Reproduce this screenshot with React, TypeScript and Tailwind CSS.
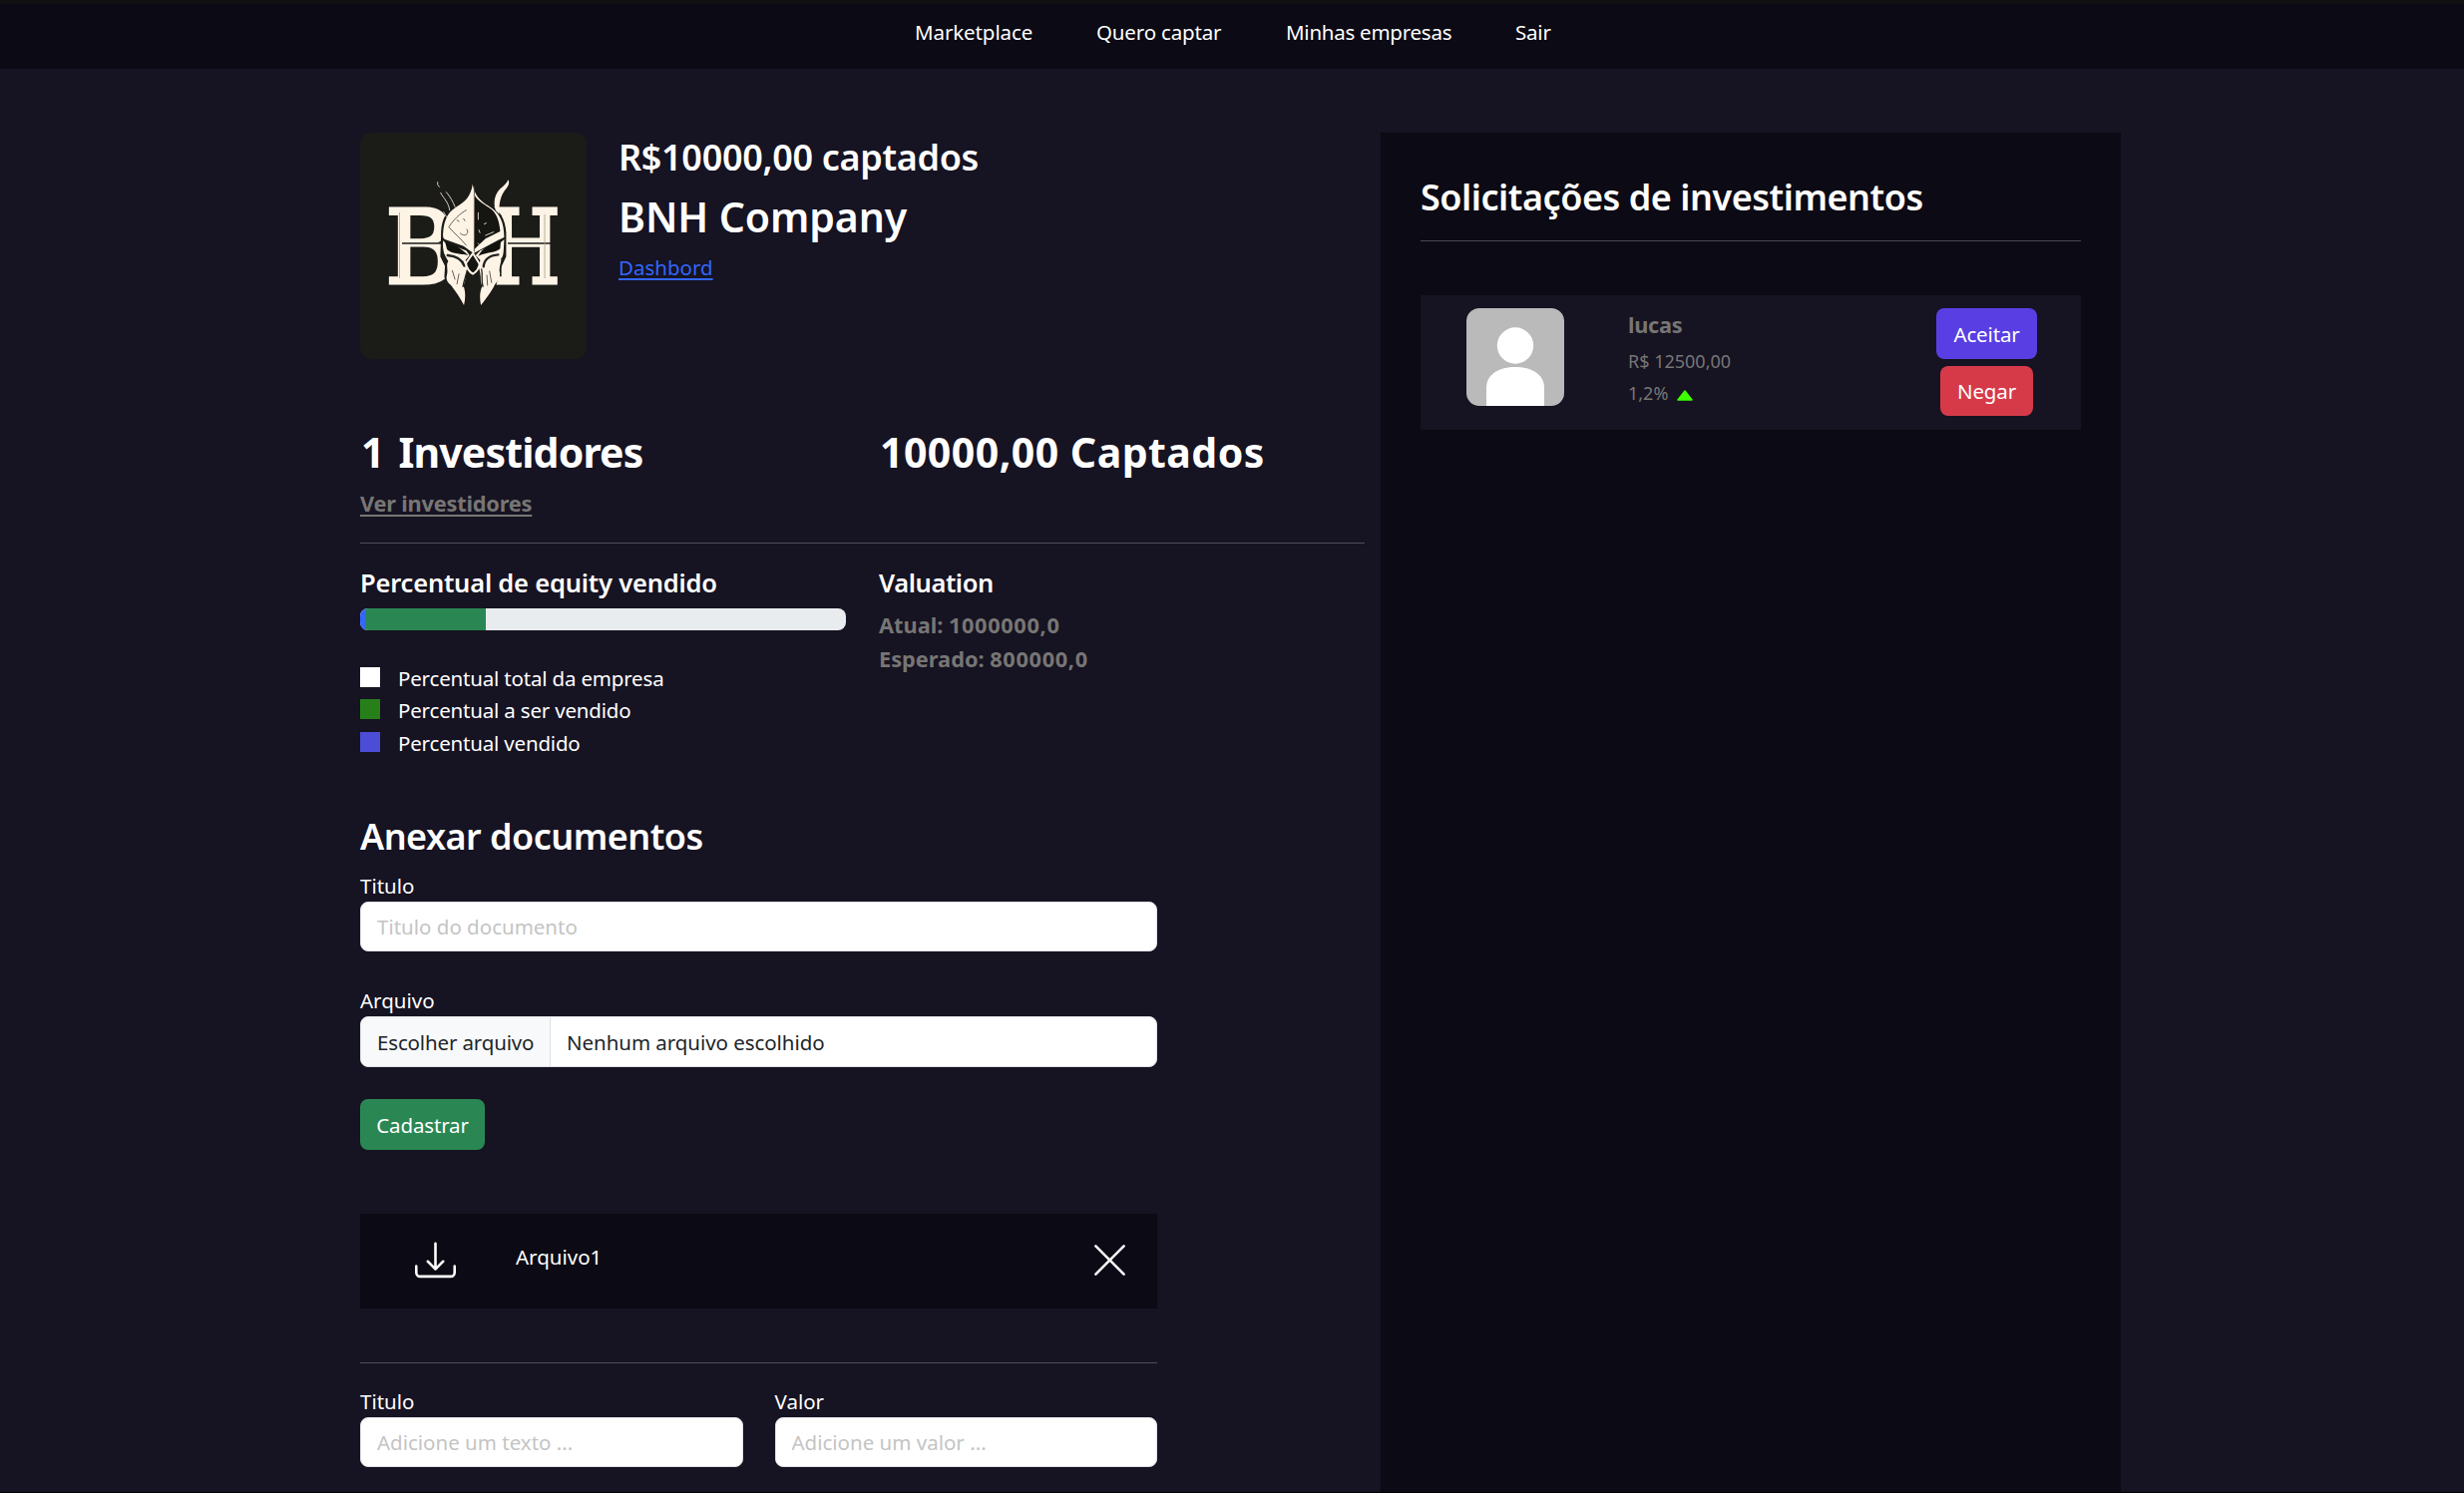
import type { ReactNode } from "react";
import { BsDownload, BsXLg } from "react-icons/bs";

const navItems = [
  { label: "Marketplace", cls: "w-[182px] tracking-[-0.1px]" },
  { label: "Quero captar", cls: "w-[190px] tracking-[-0.16px]" },
  { label: "Minhas empresas", cls: "w-[230px] tracking-[-0.25px]" },
  { label: "Sair", cls: "w-[36px] tracking-[-0.2px]" },
];

const legend = [
  { label: "Percentual total da empresa", box: "bg-white", row: "" },
  { label: "Percentual a ser vendido", box: "bg-[#277f1a]", row: "" },
  { label: "Percentual vendido", box: "bg-[#4c4dd6]", row: "mt-px" },
];

function Logo() {
  return (
    <svg viewBox="0 0 227 227" className="h-[227px] w-[227px] shrink-0 rounded-[11px] bg-[#1b1b18]">
      <g fill="#fef4e6" stroke="#fef4e6" strokeWidth="3" fontFamily="DejaVu Serif, serif" fontSize="102">
        <text x="25" y="150.500" textLength="71" lengthAdjust="spacingAndGlyphs">B</text>
        <text x="131" y="150.500" textLength="70" lengthAdjust="spacingAndGlyphs">H</text>
      </g>
      <path d="M42 111H86M148 111H196" stroke="#1b1b18" strokeWidth="1.300" />
      <path d="M39.500 80V146M185 82V146" stroke="#a89e90" strokeWidth="0.800" />
      <g transform="translate(38.400 37) scale(0.33333)" strokeLinejoin="round" strokeLinecap="round">
        <path
          d="M223 36C217 75 195 92 165 112C136 134 128 160 128 200L126 262L140 290L138 325L160 352L198 414L210 350L224 322L241 352L250 414L294 348L306 300L324 262L324 190C322 150 305 120 268 98C246 84 228 70 223 36Z"
          fill="#1b1b18"
        />
        <path
          d="M223 44C218 80 202 96 172 114C144 132 136 160 134 196C134 206 136 210 146 212L196 230L226 252L300 212L318 204C318 160 306 130 272 110C246 94 230 80 223 44Z"
          fill="#fef4e6"
        />
        <path
          d="M230 78C238 96 262 106 280 120C298 136 304 160 306 186L262 208L228 240Z"
          fill="#151512"
        />
        <path d="M292 122C284 98 290 74 306 58C316 50 326 42 330 31C336 40 330 50 322 60C306 80 302 104 303 134Z" fill="#fef4e6" />
        <path
          d="M134 214C150 232 176 232 204 244L214 258L202 272L206 298C204 322 200 336 196 350C202 368 202 388 197 408C186 386 172 366 158 348C146 338 142 330 146 316C150 300 142 286 150 276C142 262 132 252 134 214Z"
          fill="#fef4e6"
        />
        <path
          d="M318 210C300 230 270 232 246 244L232 258L246 272L242 296C250 318 244 336 252 350C244 368 244 388 248 408C262 392 282 364 290 346C302 332 308 322 304 306C302 292 312 272 308 268C318 262 316 240 318 210Z"
          fill="#fef4e6"
        />
        <path d="M140 216C160 228 184 230 210 258C184 252 160 254 146 240ZM308 214C284 226 258 228 240 260C266 248 290 252 306 238Z" fill="#12120f" />
        <path d="M148 258C170 260 190 266 198 290M300 256C276 258 258 268 256 292" fill="none" stroke="#24231e" strokeWidth="7" />
        <path d="M208 300C202 322 198 330 194 352M250 300C254 322 248 334 254 352" fill="none" stroke="#24231e" strokeWidth="4" />
        <path d="M202 322C208 300 216 318 224 320C236 316 240 306 246 322L242 410H206Z" fill="#1b1b18" />
        <path d="M224 252L203 282C206 300 214 308 224 314C234 308 242 298 244 284Z" fill="#151512" stroke="#fef4e6" strokeWidth="6" />
        <path
          d="M228 52V246M152 172C166 150 186 132 204 122M152 174C168 192 188 208 204 228M186 192C202 206 214 190 206 180M176 152l6 4M196 148l4 6M170 330l-8 -26M176 344l6 -30M280 340l-6 -34M268 348l-2 -30"
          fill="none"
          stroke="#4a443b"
          strokeWidth="2.500"
        />
        <path
          d="M118 38V46L123 52M127 70C136 88 150 96 154 122M144 68C156 82 164 96 170 112M136 128L144 142M240 130V150M242 182l3 8M240 222l4 6M262 198l24 -10M258 164l6 -3"
          fill="none"
          stroke="#d8cdbd"
          strokeWidth="3"
        />
      </g>
    </svg>
  );
}

function Avatar() {
  return (
    <svg viewBox="0 0 98 98" className="h-[98px] w-[98px] rounded-[13px] bg-[#bababa]">
      <circle cx="49" cy="37.500" r="18.200" fill="#fff" />
      <path d="M20 98V80C20 66 33 59 49 59S78 66 78 80V98Z" fill="#fff" />
    </svg>
  );
}

function Field({ label, placeholder, className = "" }: { label: string; placeholder: string; className?: string }) {
  return (
    <label className={"block " + className}>
      <span className="block">{label}</span>
      <input
        placeholder={placeholder}
        className="block h-[50px] w-full rounded-[8px] border border-[#dee2e6] bg-white px-4 leading-8 text-[#212529] placeholder:text-[#c4c4c4]"
      />
    </label>
  );
}

function Button({ children, className }: { children: ReactNode; className: string }) {
  return (
    <button className={"flex items-center justify-center rounded-[8px] tracking-[-0.15px] text-white " + className}>
      {children}
    </button>
  );
}

function Rule({ className }: { className: string }) {
  return <div className={"h-px " + className} />;
}

export default function App() {
  return (
    <div className="flex h-[1497px] w-[2470px] flex-col overflow-hidden border-b border-black bg-[#161322] font-['Noto_Sans',sans-serif] text-[20.5px] leading-8 text-white">
      <nav className="flex h-[69px] shrink-0 border-t-4 border-[#111114] bg-[#0c0a14] pt-3 pl-[917px]">
        {navItems.map((n) => (
          <a key={n.label} className={"block shrink-0 whitespace-nowrap " + n.cls}>
            {n.label}
          </a>
        ))}
      </nav>

      <main className="flex min-h-0 flex-1 pt-16 pl-[361px]">
        <div className="w-[1007px] shrink-0">
          <header className="flex h-[227px] gap-8">
            <Logo />
            <div className="pt-0.5">
              <h3 className="text-[36px] leading-[45px] font-semibold tracking-[-0.32px]">R$10000,00 captados</h3>
              <h2 className="mt-3 text-[41px] leading-[51px] font-semibold tracking-[-0.1px]">BNH Company</h2>
              <a className="mt-[9px] block text-[#3366fb] underline decoration-2 underline-offset-[3px]">Dashbord</a>
            </div>
          </header>

          <section className="mt-[68px] grid grid-cols-[520px_1fr] text-[41px] leading-[51px] font-bold">
            <div>
              <h2 className="pl-px tracking-[-0.85px] [word-spacing:5px]">1 Investidores</h2>
              <a className="mt-2.5 block text-[21.75px] leading-8 tracking-[-0.2px] text-[#777674] underline decoration-2 underline-offset-[3px]">
                Ver investidores
              </a>
            </div>
            <h2 className="pl-px tracking-[0.48px]">10000,00 Captados</h2>
          </section>

          <Rule className="mt-[23px] bg-[#504e59]" />

          <section className="mt-[23px] grid grid-cols-[487px_1fr] gap-x-[33px]">
            <div>
              <h5 className="text-[25.5px] font-semibold tracking-[-0.2px]">Percentual de equity vendido</h5>
              <div className="mt-2.5 flex h-[22px] overflow-hidden rounded-[8px] bg-[#e9ecef]">
                <div className="w-[5px] bg-[#3366fb]" />
                <div className="w-[121px] bg-[#2a8753]" />
              </div>
              <ul className="mt-8">
                {legend.map((l) => (
                  <li key={l.label} className={"flex h-8 gap-[18px] tracking-[-0.18px] " + l.row}>
                    <span className={"mt-[5px] h-5 w-5 " + l.box} />
                    {l.label}
                  </li>
                ))}
              </ul>
            </div>
            <div>
              <h5 className="text-[25.5px] font-semibold tracking-[-0.4px]">Valuation</h5>
              <div className="mt-[11px] text-[21.75px] font-bold text-[#777674]">
                <p>
                  Atual: <span className="tracking-[0.65px]">1000000,0</span>
                </p>
                <p className="mt-0.5">
                  Esperado: <span className="tracking-[0.65px]">800000,0</span>
                </p>
              </div>
            </div>
          </section>

          <section className="mt-[55px] w-[799px]">
            <h3 className="text-[36px] leading-[45px] font-semibold tracking-[-0.53px]">Anexar documentos</h3>
            <Field label="Titulo" placeholder="Titulo do documento" className="mt-[11px]" />
            <p className="mt-[33px]">Arquivo</p>
            <div className="flex h-[51px] items-stretch overflow-hidden rounded-[8px] border border-[#dee2e6] bg-white text-[#212529]">
              <span className="flex w-[190px] items-center border-r border-[#dee2e6] bg-[#f8f9fa] pl-4 tracking-[-0.15px]">
                Escolher arquivo
              </span>
              <span className="flex items-center pl-4 tracking-[-0.05px]">Nenhum arquivo escolhido</span>
            </div>
            <Button className="mt-8 h-[51px] w-[125px] bg-[#2a8753]">Cadastrar</Button>

            <div className="mt-16 flex h-[95px] bg-[#0c0a14] pr-[27px] pl-[55px]">
              <BsDownload className="mt-[26px] h-[41px] w-[41px]" />
              <span className="mt-[27px] ml-[60px] flex-1">Arquivo1</span>
              <BsXLg className="mt-[26px] h-[41px] w-[41px]" />
            </div>

            <Rule className="mt-[54px] bg-[#504e59]" />

            <div className="mt-[22px] grid grid-cols-2 gap-8">
              <Field label="Titulo" placeholder="Adicione um texto ..." />
              <Field label="Valor" placeholder="Adicione um valor ..." />
            </div>
          </section>
        </div>

        <aside className="ml-4 w-[742px] shrink-0 bg-[#0c0a14] px-10 pt-[42px]">
          <h3 className="text-[36px] leading-[45px] font-semibold tracking-[-0.47px]">Solicitações de investimentos</h3>
          <Rule className="mt-[21px] bg-[#494750]" />
          <div className="mt-[54px] flex h-[135px] bg-[#161322] pt-[13px] pr-[44px] pl-[46px]">
            <Avatar />
            <div className="ml-16 flex-1 text-[18px] leading-[32px] text-[#777674]">
              <p className="mt-px text-[21.75px] font-bold tracking-[-0.3px]">lucas</p>
              <p className="mt-1">R$ 12500,00</p>
              <p className="flex items-center">
                1,2%
                <svg viewBox="0 0 16 11" className="mt-1 ml-[9px] h-[11px] w-4">
                  <path d="M8 1L15 10H1Z" fill="#3cff00" stroke="#3cff00" strokeWidth="1.500" strokeLinejoin="round" />
                </svg>
              </p>
            </div>
            <div className="flex flex-col items-center gap-[7px]">
              <Button className="h-[51px] w-[101px] bg-[#593fe3]">Aceitar</Button>
              <Button className="h-[50px] w-[93px] bg-[#d63a49]">Negar</Button>
            </div>
          </div>
        </aside>
      </main>
    </div>
  );
}
